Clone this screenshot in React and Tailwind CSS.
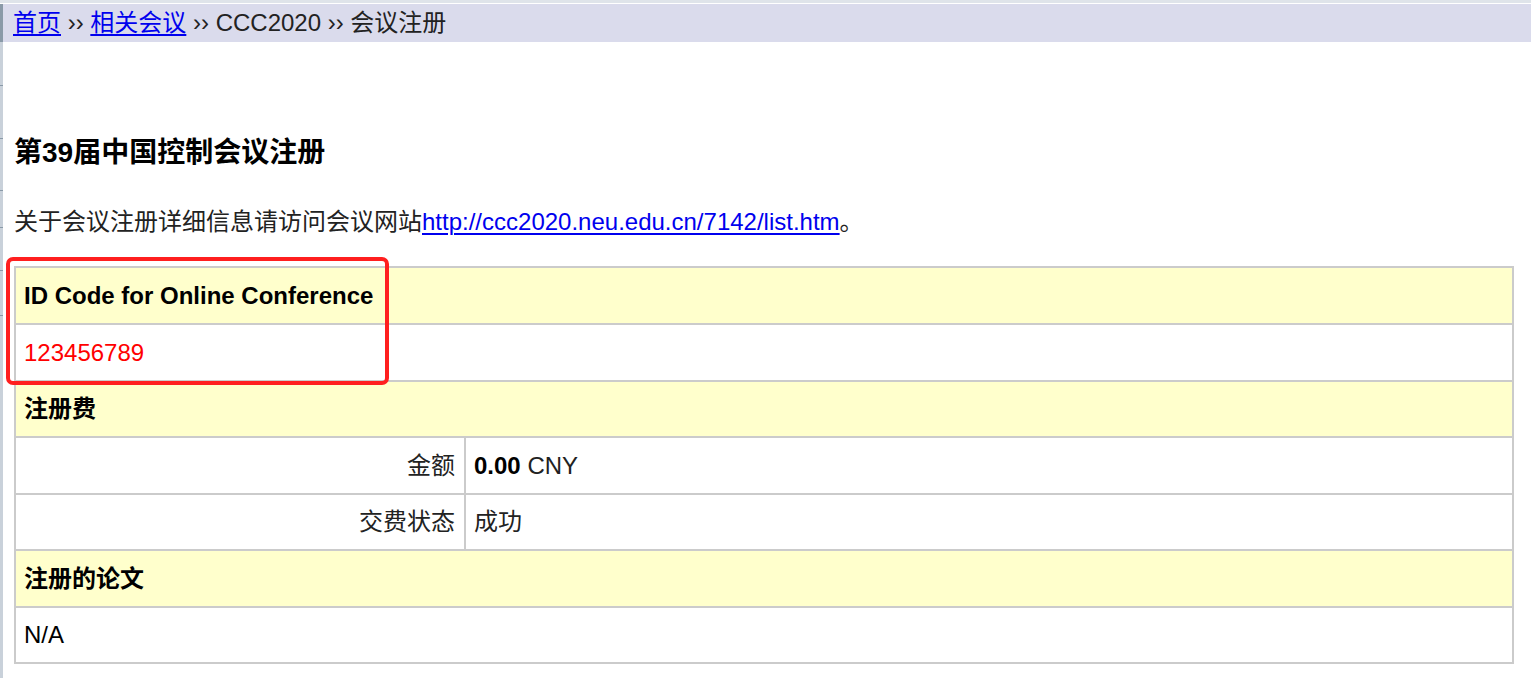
import React from "react";

const FONT = { fontFamily: '"Liberation Sans", Arial, "Noto Sans CJK SC", sans-serif' };

function Row({ h, yellow, children, last }) {
  return (
    <div
      className={`flex items-center ${h} ${yellow ? "bg-[#ffffcc]" : "bg-white"} ${
        last ? "" : "border-b-2 border-[#cbcbcb]"
      }`}
    >
      {children}
    </div>
  );
}

export default function App() {
  return (
    <div className="w-[1531px] h-[678px] overflow-hidden bg-white text-[24px] text-[#1a1a1a]" style={FONT}>
      <div className="h-[3px] bg-[#dfe4ea]" />
      <div className="h-px bg-white" />
      <div className="flex">
        <div className="w-[3px] flex flex-col bg-[#c9d1da] h-[674px]">
          <div className="h-[38px] bg-[#8a9aa8]" />
          <div className="mt-[43px] h-px bg-[#8a9aa8]" />
          <div className="mt-[52px] h-px bg-[#8a9aa8]" />
          <div className="mt-[51px] h-px bg-[#8a9aa8]" />
          <div className="mt-[36px] h-px bg-[#8a9aa8]" />
          <div className="mt-[42px] h-px bg-[#8a9aa8]" />
          <div className="mt-[44px] h-px bg-[#8a9aa8]" />
        </div>
        <div className="flex-1 flex flex-col">
          <div className="h-[38px] bg-[#dadbec] pl-[10px] leading-[38px] whitespace-nowrap text-[#222]">
            <a href="#" className="text-[#0000ee] underline decoration-2 underline-offset-[3px]">首页</a>
            {" ›› "}
            <a href="#" className="text-[#0000ee] underline decoration-2 underline-offset-[3px]">相关会议</a>
            {" ›› CCC2020 ›› 会议注册"}
          </div>
          <div className="pl-[11px] pr-[17px]">
            <h3 className="mt-[95px] h-[32px] leading-[32px] text-[28px] font-bold text-black">
              第39届中国控制会议注册
            </h3>
            <p className="mt-[39px] h-[28px] leading-[28px] text-[#222]">
              关于会议注册详细信息请访问会议网站
              <a href="#" className="text-[#0000ee] underline decoration-2 underline-offset-[3px]">
                http://ccc2020.neu.edu.cn/7142/list.htm
              </a>
              。
            </p>
            <div className="relative mt-[30px] w-[1500px]">
              <div className="border-2 border-[#cbcbcb] flex flex-col">
                <Row h="h-[57px]" yellow>
                  <span className="pl-[8px] font-bold text-black">ID Code for Online Conference</span>
                </Row>
                <Row h="h-[57px]">
                  <span className="pl-[8px] text-[#ff0000]">123456789</span>
                </Row>
                <Row h="h-[56px]" yellow>
                  <span className="pl-[8px] font-bold text-black">注册费</span>
                </Row>
                <Row h="h-[57px]">
                  <div className="w-[450px] h-full flex items-center justify-end pr-[9px] border-r-2 border-[#cbcbcb] text-[#222]">
                    金额
                  </div>
                  <div className="pl-[8px] text-[#222]">
                    <b className="text-black">0.00</b> CNY
                  </div>
                </Row>
                <Row h="h-[56px]">
                  <div className="w-[450px] h-full flex items-center justify-end pr-[9px] border-r-2 border-[#cbcbcb] text-[#222]">
                    交费状态
                  </div>
                  <div className="pl-[8px] text-[#222]">成功</div>
                </Row>
                <Row h="h-[57px]" yellow>
                  <span className="pl-[8px] font-bold text-black">注册的论文</span>
                </Row>
                <Row h="h-[54px]" last>
                  <span className="pl-[8px] text-black">N/A</span>
                </Row>
              </div>
              <div className="absolute left-[-8px] top-[-9px] w-[383px] h-[128px] border-4 border-[#ff1f1f] rounded-[7px]" />
            </div>
          </div>
        </div>
      </div>
    </div>
  );
}
